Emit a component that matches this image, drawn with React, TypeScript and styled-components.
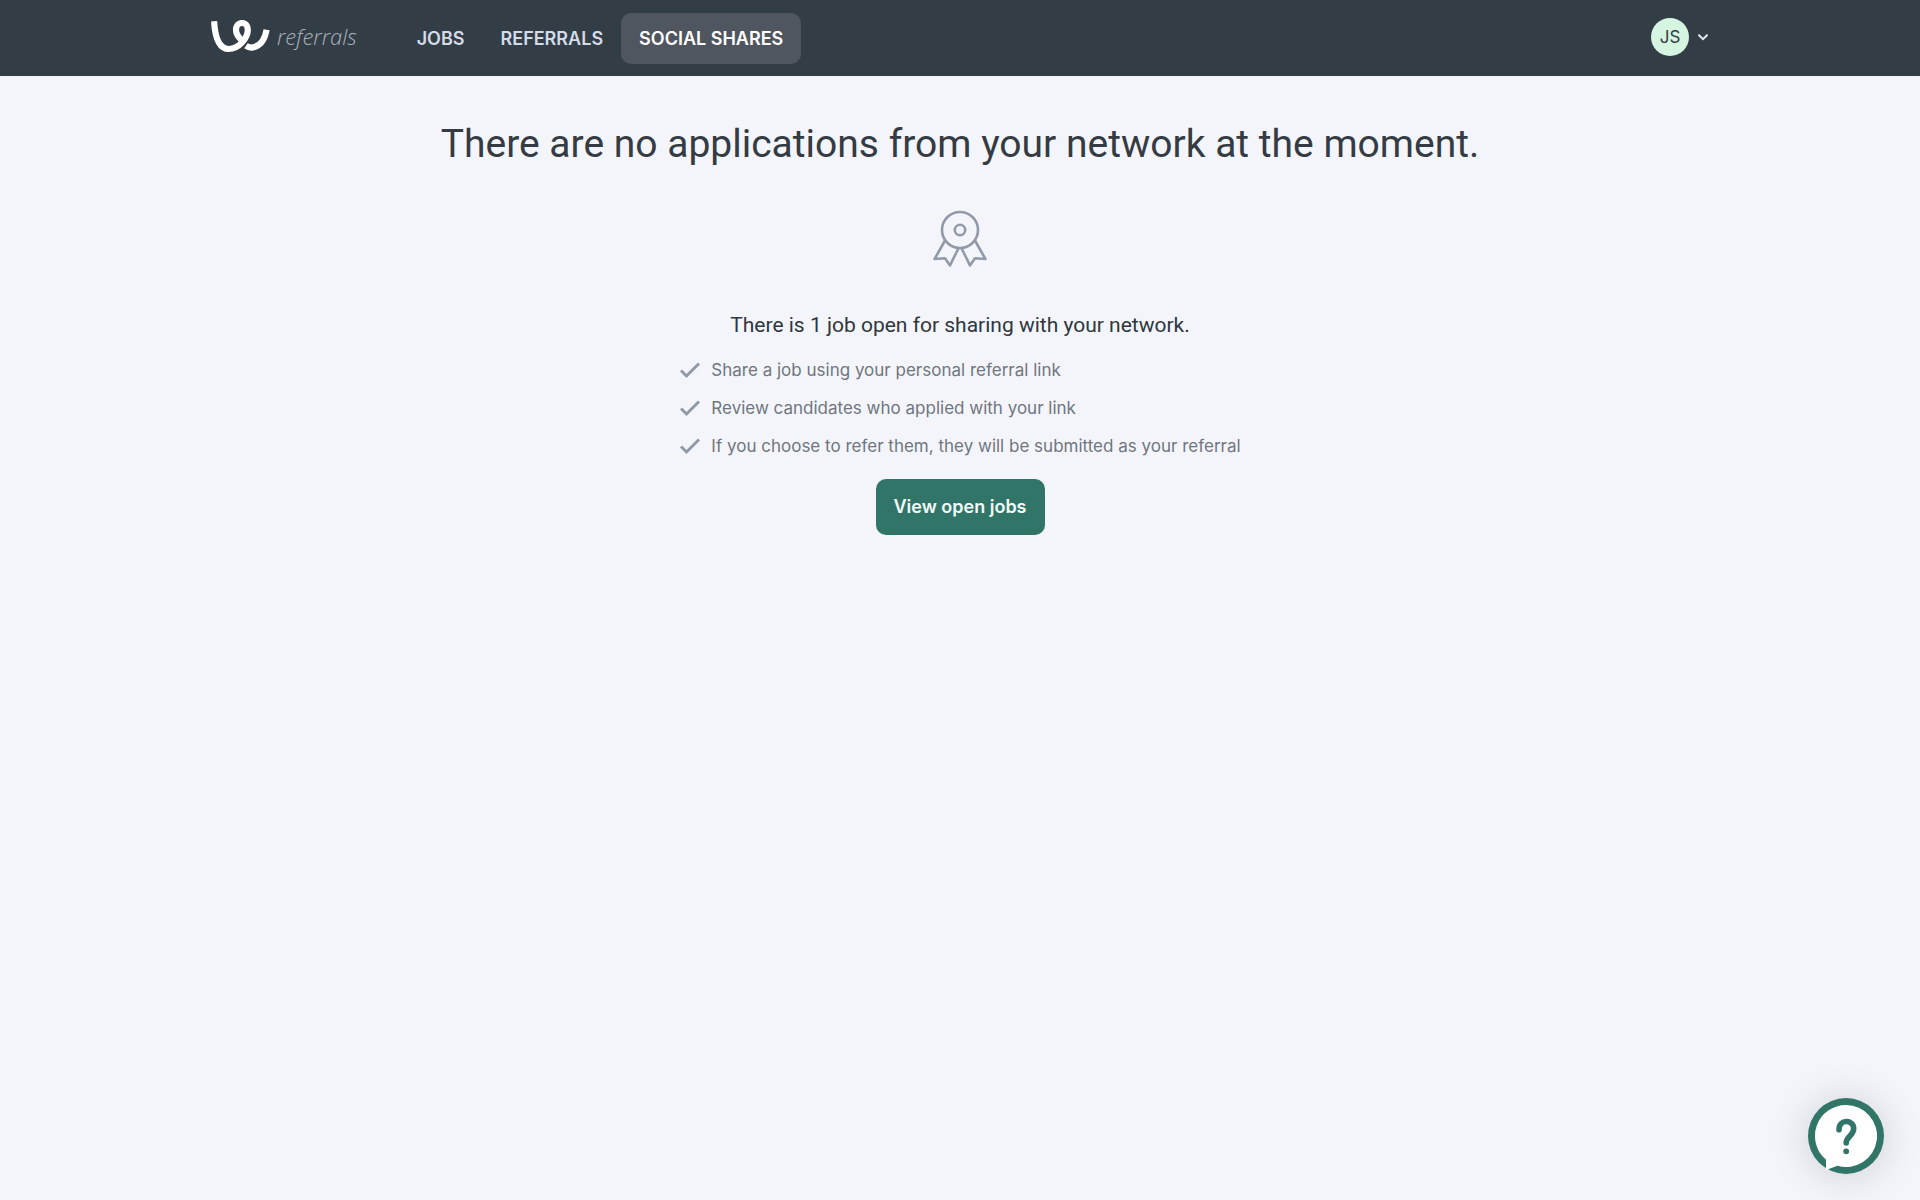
import React from "react";
import styled, { createGlobalStyle } from "styled-components";

const GlobalStyle = createGlobalStyle`
  *, *::before, *::after { box-sizing: border-box; }
  body {
    margin: 0;
    min-height: 100vh;
    background: #f3f5fa;
    color: #343b43;
    font-family: Inter, "Liberation Sans", sans-serif;
  }
`;

const Header = styled.header`
  height: 76px;
  background: #333d46;
`;

const HeaderInner = styled.div`
  display: flex;
  align-items: center;
  height: 100%;
  max-width: 1506px;
  margin: 0 auto;
`;

const Brand = styled.a`
  display: flex;
  align-items: center;
  gap: 7px;
  margin-right: 42px;
  padding-bottom: 4px;
  color: #a9b2bd;
  text-decoration: none;
`;

const BrandName = styled.span`
  font: italic 300 22px/32px "Open Sans", sans-serif;
`;

const Nav = styled.nav`
  display: flex;
`;

const NavLink = styled.a<{ $active?: boolean }>`
  padding: 1px 18px 0;
  border-radius: 10px;
  background: ${(p) => (p.$active ? "#50565f" : "transparent")};
  color: ${(p) => (p.$active ? "#ffffff" : "#d3dbe8")};
  font-size: 18px;
  font-weight: 600;
  line-height: 50px;
  text-decoration: none;
`;

const Account = styled.button`
  display: flex;
  align-items: center;
  gap: 4px;
  margin-left: auto;
  padding: 0 0 2px;
  border: 0;
  background: none;
  color: #e1e8f2;
  font-family: inherit;
  cursor: pointer;
`;

const Avatar = styled.span`
  width: 38px;
  border-radius: 50%;
  background: #d5f5e1;
  color: #333c45;
  font-size: 17px;
  line-height: 38px;
  text-align: center;
`;

const Main = styled.main`
  display: flex;
  flex-direction: column;
  align-items: center;
  padding: 40px 24px;
`;

const Title = styled.h1`
  margin: 0 0 35px;
  font-family: Roboto, sans-serif;
  font-size: 39px;
  font-weight: 400;
  line-height: 56px;
  text-align: center;
`;

const Lead = styled.p`
  margin: 41px 0 12px;
  color: #30363d;
  font-family: Roboto, sans-serif;
  font-size: 21px;
  line-height: 34px;
`;

const Steps = styled.ul`
  display: grid;
  gap: 6px;
  margin: 0 0 17px;
  padding: 0;
  list-style: none;
`;

const Step = styled.li`
  display: flex;
  align-items: center;
  gap: 10px;
  color: #70757f;
  font-size: 17px;
  line-height: 32px;
`;

const JobsButton = styled.button`
  padding: 0 18px;
  border: 0;
  border-radius: 10px;
  background: #307568;
  color: #f2fbf9;
  font-family: inherit;
  font-size: 18px;
  font-weight: 600;
  line-height: 56px;
  cursor: pointer;
`;

const HelpButton = styled.button`
  position: fixed;
  right: 36px;
  bottom: 26px;
  display: flex;
  padding: 0;
  border: 0;
  border-radius: 50%;
  background: #307568;
  box-shadow: 0 2px 40px rgba(0, 0, 0, 0.16);
  cursor: pointer;
`;

const Logo = () => (
  <svg width="63" height="33" viewBox="-3 0 63 33" fill="none" stroke="#fff" strokeWidth="6.2" aria-hidden="true">
    <path d="M4.1 1.3C4.8 13.5 8 29 18.8 29C28.5 29 37.8 18.5 37.8 9.8C37.8 5.5 35.5 3 32 3C28.5 3 26 5.8 26 9.6C26 13.4 28 16.8 30.7 19.2" />
    <path d="M36 25.8C38 27.2 40.3 27.8 42.7 27.4C50.6 26 55 18.6 56.6 9.7" />
  </svg>
);

const Chevron = () => (
  <svg width="20" height="20" viewBox="0 0 20 20" fill="none" stroke="currentColor" strokeWidth="2" strokeLinecap="round" aria-hidden="true">
    <path d="M6 8.2L10 12.2L14 8.2" />
  </svg>
);

const Ribbon = () => (
  <svg width="56" height="60" viewBox="0 0 56 60" fill="none" stroke="#9299a8" strokeWidth="2.6" strokeLinejoin="round" aria-hidden="true">
    <circle cx="28" cy="23" r="18" />
    <circle cx="28" cy="23" r="5.2" />
    <path d="M13 33.5L2.6 52L13 51.2L18 58.4L26.6 41" />
    <path d="M43 33.5L53.4 52L43 51.2L38 58.4L29.4 41" />
  </svg>
);

const Check = () => (
  <svg width="22" height="20" viewBox="0 0 22 20" fill="none" stroke="#9299a8" strokeWidth="3" aria-hidden="true">
    <path d="M2 10.5L7.5 16L20 3.5" />
  </svg>
);

const HelpIcon = () => (
  <svg width="76" height="76" viewBox="0 0 76 76" fill="none" aria-hidden="true">
    <path d="M38 7a31 31 0 1 1-8.5 60.8L18 72V61.7A31 31 0 0 1 38 7Z" fill="#fff" />
    <path d="M31 31.8C31 20.5 45.7 21.5 45.7 30.6C45.7 38.3 38.2 37.8 38.2 45" stroke="#307568" strokeWidth="5.6" strokeLinecap="round" />
    <circle cx="38.2" cy="53.3" r="2.9" fill="#307568" />
  </svg>
);

const navItems = ["JOBS", "REFERRALS", "SOCIAL SHARES"];

const steps = [
  "Share a job using your personal referral link",
  "Review candidates who applied with your link",
  "If you choose to refer them, they will be submitted as your referral",
];

export default function App() {
  return (
    <>
      <GlobalStyle />
      <Header>
        <HeaderInner>
          <Brand href="#">
            <Logo />
            <BrandName>referrals</BrandName>
          </Brand>
          <Nav>
            {navItems.map((item) => (
              <NavLink key={item} href="#" $active={item === "SOCIAL SHARES"}>
                {item}
              </NavLink>
            ))}
          </Nav>
          <Account type="button">
            <Avatar>JS</Avatar>
            <Chevron />
          </Account>
        </HeaderInner>
      </Header>
      <Main>
        <Title>There are no applications from your network at the moment.</Title>
        <Ribbon />
        <Lead>There is 1 job open for sharing with your network.</Lead>
        <Steps>
          {steps.map((step) => (
            <Step key={step}>
              <Check />
              {step}
            </Step>
          ))}
        </Steps>
        <JobsButton type="button">View open jobs</JobsButton>
      </Main>
      <HelpButton type="button" aria-label="Help">
        <HelpIcon />
      </HelpButton>
    </>
  );
}
